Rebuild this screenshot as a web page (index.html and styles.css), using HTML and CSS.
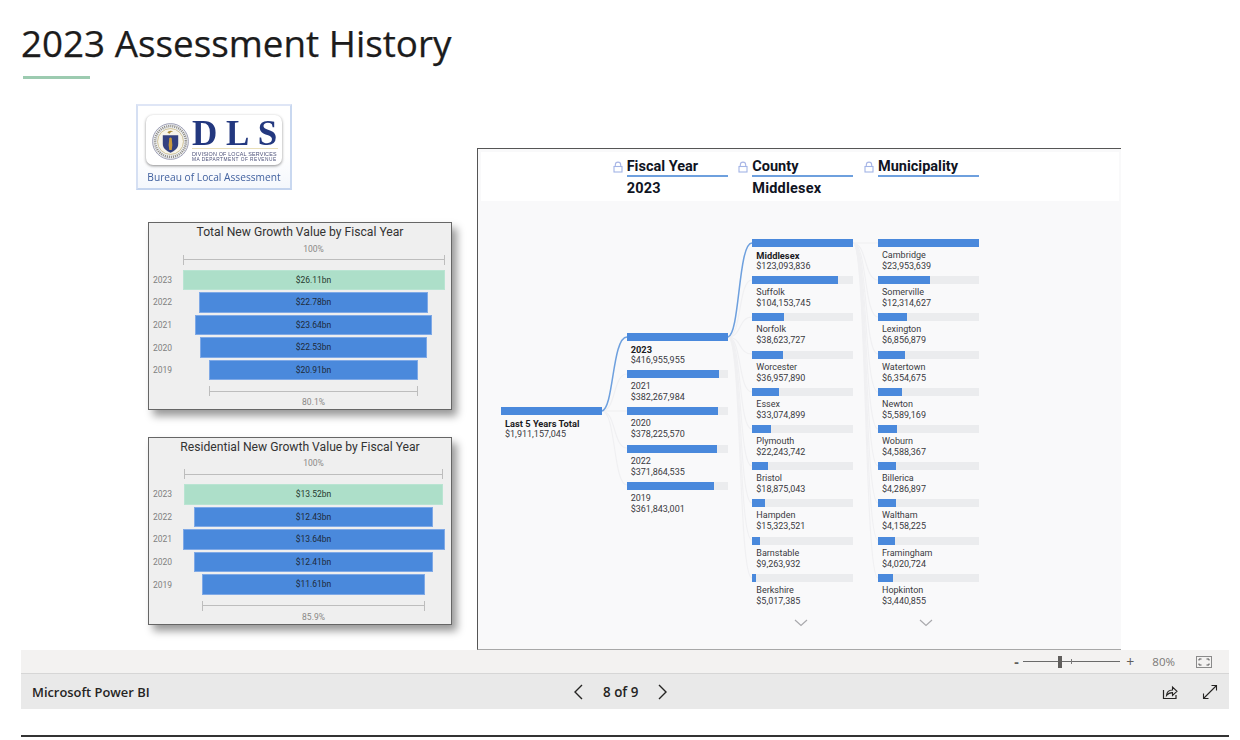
FILE: index.html
```html
<!DOCTYPE html>
<html lang="en">
<head>
<meta charset="utf-8">
<title>2023 Assessment History</title>
<link rel="stylesheet" href="styles.css">
</head>
<body>
<main class="page">
  <h1 class="title">2023 Assessment History</h1>
  <div class="rule"></div>

  <section class="canvas">
    <div class="left-col">
      <div class="logo">
        <div class="logo-card">
          <svg class="seal" viewBox="0 0 36 36" width="37" height="37">
            <circle cx="18" cy="18" r="17.4" fill="#eef0f2" stroke="#8d8fa8" stroke-width="0.8"/>
            <circle cx="18" cy="18" r="15" fill="none" stroke="#8f8c86" stroke-width="2.4" stroke-dasharray="1 1"/>
            <circle cx="18" cy="18" r="12.6" fill="#f7f4ea" stroke="#c2b078" stroke-width="0.7"/>
            <path d="M10.5 12h15v8.500c0 4.200-3.600 6.600-7.500 8.500-3.900-1.900-7.500-4.300-7.500-8.500z" fill="#33407f"/>
            <path d="M18 14c1.200 0 1.500 1 1.300 2.300l.5 5-.6 5h-2.400l-.6-5 .5-5c-.2-1.300.1-2.300 1.300-2.300z" fill="#c99a3e"/>
            <path d="M15 9.500c1-2 4-2.500 5.500-1-1.500-.2-2.800.4-3.300 2z" fill="#a98b3a"/>
          </svg>
          <div class="logo-words">
            <div class="logo-dls">DLS</div>
            <div class="logo-sub">DIVISION OF LOCAL SERVICES</div>
            <div class="logo-sub2">MA DEPARTMENT OF REVENUE</div>
          </div>
        </div>
        <div class="logo-bureau">Bureau of Local Assessment</div>
      </div>

      <article class="funnel">
        <h2 class="funnel-title">Total New Growth Value by Fiscal Year</h2>
        <div class="span-block"><span class="span-pct">100%</span><div class="bracket" style="width:100%"><i></i></div></div>
        <div class="funnel-rows">
          <div class="f-row"><span class="f-year">2023</span><div class="f-plot"><div class="f-bar green" style="width:100%">$26.11bn</div></div></div>
          <div class="f-row"><span class="f-year">2022</span><div class="f-plot"><div class="f-bar" style="width:87.2%">$22.78bn</div></div></div>
          <div class="f-row"><span class="f-year">2021</span><div class="f-plot"><div class="f-bar" style="width:90.5%">$23.64bn</div></div></div>
          <div class="f-row"><span class="f-year">2020</span><div class="f-plot"><div class="f-bar" style="width:86.3%">$22.53bn</div></div></div>
          <div class="f-row"><span class="f-year">2019</span><div class="f-plot"><div class="f-bar" style="width:80.1%">$20.91bn</div></div></div>
        </div>
        <div class="span-block lower"><div class="bracket" style="width:80.1%"><i></i></div><span class="span-pct">80.1%</span></div>
      </article>

      <article class="funnel second">
        <h2 class="funnel-title">Residential New Growth Value by Fiscal Year</h2>
        <div class="span-block"><span class="span-pct">100%</span><div class="bracket" style="width:99.1%"><i></i></div></div>
        <div class="funnel-rows">
          <div class="f-row"><span class="f-year">2023</span><div class="f-plot"><div class="f-bar green" style="width:99.1%">$13.52bn</div></div></div>
          <div class="f-row"><span class="f-year">2022</span><div class="f-plot"><div class="f-bar" style="width:91.1%">$12.43bn</div></div></div>
          <div class="f-row"><span class="f-year">2021</span><div class="f-plot"><div class="f-bar" style="width:100%">$13.64bn</div></div></div>
          <div class="f-row"><span class="f-year">2020</span><div class="f-plot"><div class="f-bar" style="width:91%">$12.41bn</div></div></div>
          <div class="f-row"><span class="f-year">2019</span><div class="f-plot"><div class="f-bar" style="width:85.1%">$11.61bn</div></div></div>
        </div>
        <div class="span-block lower"><div class="bracket" style="width:85.1%"><i></i></div><span class="span-pct">85.9%</span></div>
      </article>
    </div>

    <section class="tree">
      <header class="tree-head">
        <div></div>
        <div class="head-col">
          <div class="head-name"><svg class="lock" viewBox="0 0 10 12" width="10" height="12"><path d="M2.300 5.500V4a2.700 2.900 0 0 1 5.400 0v1.500" fill="none" stroke="#a9b6e6" stroke-width="1.100"/><rect x="1" y="5.500" width="8" height="5.500" fill="none" stroke="#a3b4e6" stroke-width="1.100"/></svg>Fiscal Year</div>
          <div class="head-value">2023</div>
        </div>
        <div class="head-col">
          <div class="head-name"><svg class="lock" viewBox="0 0 10 12" width="10" height="12"><path d="M2.300 5.500V4a2.700 2.900 0 0 1 5.400 0v1.500" fill="none" stroke="#a9b6e6" stroke-width="1.100"/><rect x="1" y="5.500" width="8" height="5.500" fill="none" stroke="#a3b4e6" stroke-width="1.100"/></svg>County</div>
          <div class="head-value">Middlesex</div>
        </div>
        <div class="head-col">
          <div class="head-name"><svg class="lock" viewBox="0 0 10 12" width="10" height="12"><path d="M2.300 5.500V4a2.700 2.900 0 0 1 5.400 0v1.500" fill="none" stroke="#a9b6e6" stroke-width="1.100"/><rect x="1" y="5.500" width="8" height="5.500" fill="none" stroke="#a3b4e6" stroke-width="1.100"/></svg>Municipality</div>
        </div>
      </header>

      <div class="tree-body">
        <svg class="links" viewBox="478 201 643 448" width="643" height="448">
          <g class="link-faint">
            <path d="M602 411C616 411 613 374 627 374"/>
            <path d="M602 411H627"/>
            <path d="M602 411C616 411 613 448 627 448"/>
            <path d="M602 411C616 411 613 485 627 485"/>
            <path d="M728 337C742 337 738 280 752 280"/>
            <path d="M728 337C742 337 738 317 752 317"/>
            <path d="M728 337C742 337 738 354 752 354"/>
            <path d="M728 337C742 337 738 392 752 392"/>
            <path d="M728 337C742 337 738 429 752 429"/>
            <path d="M728 337C742 337 738 466 752 466"/>
            <path d="M728 337C742 337 738 503 752 503"/>
            <path d="M728 337C742 337 738 540 752 540"/>
            <path d="M728 337C742 337 738 578 752 578"/>
            <path d="M853 243H878"/>
            <path d="M853 243C867 243 864 280 878 280"/>
            <path d="M853 243C867 243 864 317 878 317"/>
            <path d="M853 243C867 243 864 354 878 354"/>
            <path d="M853 243C867 243 864 392 878 392"/>
            <path d="M853 243C867 243 864 429 878 429"/>
            <path d="M853 243C867 243 864 466 878 466"/>
            <path d="M853 243C867 243 864 503 878 503"/>
            <path d="M853 243C867 243 864 540 878 540"/>
            <path d="M853 243C867 243 864 578 878 578"/>
          </g>
          <g class="link-active">
            <path d="M602 411C614 408 612 337 627 337"/>
            <path d="M728 337C740 334 738 243 752 243"/>
          </g>
        </svg>

        <div class="tree-cols">
          <div class="tree-col level-1">
            <div class="node"><div class="track"><div class="fill" style="width:100%"></div></div><div class="node-name strong">Last 5 Years Total</div><div class="node-value">$1,911,157,045</div></div>
          </div>
          <div class="tree-col level-2">
            <div class="node"><div class="track"><div class="fill" style="width:100%"></div></div><div class="node-name strong">2023</div><div class="node-value">$416,955,955</div></div>
            <div class="node"><div class="track"><div class="fill" style="width:91.7%"></div></div><div class="node-name">2021</div><div class="node-value">$382,267,984</div></div>
            <div class="node"><div class="track"><div class="fill" style="width:90.7%"></div></div><div class="node-name">2020</div><div class="node-value">$378,225,570</div></div>
            <div class="node"><div class="track"><div class="fill" style="width:89.2%"></div></div><div class="node-name">2022</div><div class="node-value">$371,864,535</div></div>
            <div class="node"><div class="track"><div class="fill" style="width:86.800%"></div></div><div class="node-name">2019</div><div class="node-value">$361,843,001</div></div>
          </div>
          <div class="tree-col level-3">
            <div class="node"><div class="track"><div class="fill" style="width:100%"></div></div><div class="node-name strong">Middlesex</div><div class="node-value">$123,093,836</div></div>
            <div class="node"><div class="track"><div class="fill" style="width:84.6%"></div></div><div class="node-name">Suffolk</div><div class="node-value">$104,153,745</div></div>
            <div class="node"><div class="track"><div class="fill" style="width:31.4%"></div></div><div class="node-name">Norfolk</div><div class="node-value">$38,623,727</div></div>
            <div class="node"><div class="track"><div class="fill" style="width:30%"></div></div><div class="node-name">Worcester</div><div class="node-value">$36,957,890</div></div>
            <div class="node"><div class="track"><div class="fill" style="width:26.9%"></div></div><div class="node-name">Essex</div><div class="node-value">$33,074,899</div></div>
            <div class="node"><div class="track"><div class="fill" style="width:18.1%"></div></div><div class="node-name">Plymouth</div><div class="node-value">$22,243,742</div></div>
            <div class="node"><div class="track"><div class="fill" style="width:15.3%"></div></div><div class="node-name">Bristol</div><div class="node-value">$18,875,043</div></div>
            <div class="node"><div class="track"><div class="fill" style="width:12.4%"></div></div><div class="node-name">Hampden</div><div class="node-value">$15,323,521</div></div>
            <div class="node"><div class="track"><div class="fill" style="width:7.5%"></div></div><div class="node-name">Barnstable</div><div class="node-value">$9,263,932</div></div>
            <div class="node"><div class="track"><div class="fill" style="width:4.1%"></div></div><div class="node-name">Berkshire</div><div class="node-value">$5,017,385</div></div>
            <div class="more"><svg viewBox="0 0 14 8" width="14" height="8"><path d="M1 1l6 5.500L13 1" fill="none" stroke="#a9a9ad" stroke-width="1.200"/></svg></div>
          </div>
          <div class="tree-col level-3">
            <div class="node"><div class="track"><div class="fill" style="width:100%"></div></div><div class="node-name">Cambridge</div><div class="node-value">$23,953,639</div></div>
            <div class="node"><div class="track"><div class="fill" style="width:51.4%"></div></div><div class="node-name">Somerville</div><div class="node-value">$12,314,627</div></div>
            <div class="node"><div class="track"><div class="fill" style="width:28.6%"></div></div><div class="node-name">Lexington</div><div class="node-value">$6,856,879</div></div>
            <div class="node"><div class="track"><div class="fill" style="width:26.5%"></div></div><div class="node-name">Watertown</div><div class="node-value">$6,354,675</div></div>
            <div class="node"><div class="track"><div class="fill" style="width:23.3%"></div></div><div class="node-name">Newton</div><div class="node-value">$5,589,169</div></div>
            <div class="node"><div class="track"><div class="fill" style="width:19.2%"></div></div><div class="node-name">Woburn</div><div class="node-value">$4,588,367</div></div>
            <div class="node"><div class="track"><div class="fill" style="width:17.9%"></div></div><div class="node-name">Billerica</div><div class="node-value">$4,286,897</div></div>
            <div class="node"><div class="track"><div class="fill" style="width:17.4%"></div></div><div class="node-name">Waltham</div><div class="node-value">$4,158,225</div></div>
            <div class="node"><div class="track"><div class="fill" style="width:16.8%"></div></div><div class="node-name">Framingham</div><div class="node-value">$4,020,724</div></div>
            <div class="node"><div class="track"><div class="fill" style="width:14.4%"></div></div><div class="node-name">Hopkinton</div><div class="node-value">$3,440,855</div></div>
            <div class="more"><svg viewBox="0 0 14 8" width="14" height="8"><path d="M1 1l6 5.500L13 1" fill="none" stroke="#a9a9ad" stroke-width="1.200"/></svg></div>
          </div>
        </div>
      </div>
    </section>
  </section>

  <div class="zoombar">
    <span class="zoom-minus">-</span>
    <div class="slider"><span class="slider-thumb"></span><span class="slider-tick"></span></div>
    <span class="zoom-plus">+</span>
    <span class="zoom-pct">80%</span>
    <svg class="fit" viewBox="0 0 16 12" width="16" height="12">
      <rect x="0.500" y="0.500" width="15" height="11" fill="none" stroke="#8a8a8a" stroke-width="1"/>
      <path d="M3 4.500V3h2.500M10.500 3H13v1.500M13 7.500V9h-2.500M5.500 9H3V7.500" fill="none" stroke="#555" stroke-width="1"/>
    </svg>
  </div>

  <footer class="pbi-footer">
    <a class="brand">Microsoft Power BI</a>
    <div class="pager">
      <svg viewBox="0 0 10 16" width="10" height="16"><path d="M9 1L2 8l7 7" fill="none" stroke="#252423" stroke-width="1.400"/></svg>
      <span class="pager-text">8 of 9</span>
      <svg viewBox="0 0 10 16" width="10" height="16"><path d="M1 1l7 7-7 7" fill="none" stroke="#252423" stroke-width="1.400"/></svg>
    </div>
    <div class="foot-actions">
      <svg viewBox="0 0 16 16" width="16" height="16"><path d="M1.500 6v8.500h12.500V11" fill="none" stroke="#252423" stroke-width="1.200"/><path d="M4.500 11.500c.3-3.500 2.800-5.500 6-5.500V3l4.500 4.300-4.500 4.200V8.600c-2.500 0-4.500.8-6 2.900z" fill="none" stroke="#252423" stroke-width="1.100"/></svg>
      <svg viewBox="0 0 16 16" width="16" height="16"><path d="M1.500 14.500l13-13M9.500 1.500h5v5M1.500 9.500v5h5" fill="none" stroke="#252423" stroke-width="1.100"/></svg>
    </div>
  </footer>
  <div class="end-rule"></div>
</main>
</body>
</html>
```

FILE: styles.css
```css
* { box-sizing: border-box; }

html, body { margin: 0; padding: 0; background: #fff; }

body {
  width: 1240px;
  height: 740px;
  overflow: hidden;
  font-family: "Roboto", "Liberation Sans", sans-serif;
  color: #252423;
}

.page { padding: 19px 11px 0 21px; }

.title {
  margin: 0;
  font-family: "Open Sans", "Noto Sans", sans-serif;
  font-weight: 400;
  font-size: 36.800px;
  line-height: 48px;
  color: #1c1c1c;
  -webkit-text-stroke: 0.25px #1c1c1c;
  white-space: nowrap;
}

.rule {
  width: 67px;
  height: 2.500px;
  margin: 9px 0 0 2px;
  background: #9ccbb0;
}

.canvas {
  display: flex;
  align-items: flex-start;
  height: 546px;
  margin-top: 25.500px;
}

.left-col {
  flex: 0 0 456px;
  padding-left: 115px;
}

/* Logo */
.logo {
  width: 156px;
  height: 86px;
  padding: 9px 8px 0;
  border: 2px solid #dfe6f6;
  border-bottom-color: #c4d4ee;
  border-left-color: #d6e0f3;
  border-right-color: #c9d8f0;
  background: linear-gradient(#ffffff 60%, #f4f7fc);
  filter: blur(0.35px);
}

.logo-card {
  display: flex;
  align-items: center;
  gap: 3px;
  width: 136px;
  height: 50px;
  padding: 3px 4px 0 6px;
  border-radius: 7px;
  background: #fff;
  box-shadow: 0 1px 3px rgba(0, 0, 0, 0.45);
}

.seal { flex: none; }

.logo-words { flex: 1; min-width: 0; }

.logo-dls {
  font-family: "Liberation Serif", serif;
  font-weight: 700;
  font-size: 35px;
  line-height: 28px;
  letter-spacing: 8.600px;
  color: #23387f;
  white-space: nowrap;
}

.logo-sub, .logo-sub2 {
  font-family: "Liberation Sans", sans-serif;
  color: #4a4f78;
  white-space: nowrap;
  line-height: 6px;
}

.logo-sub { font-size: 5.400px; letter-spacing: 0.170px; border-top: 1px solid #e9dfb8; padding-top: 2px; }

.logo-sub2 { font-size: 4.800px; letter-spacing: 0.470px; }

.logo-bureau {
  margin-top: 5px;
  font-family: "Open Sans", sans-serif;
  font-size: 10.200px;
  line-height: 14px;
  color: #41619f;
  text-align: center;
  white-space: nowrap;
}

/* Funnel charts */
.funnel {
  width: 304px;
  height: 188px;
  margin: 32px 0 0 12px;
  padding-top: 1px;
  border: 1.500px solid #666;
  background: #efefef;
  box-shadow: 5px 6px 8px rgba(0, 0, 0, 0.4);
}

.funnel.second { margin-top: 26.500px; }

.funnel-title {
  margin: 0 0 1.500px;
  font-weight: 400;
  font-size: 12.150px;
  line-height: 17px;
  color: #333;
  text-align: center;
  white-space: nowrap;
}

.span-block {
  display: flex;
  flex-direction: column;
  align-items: center;
  width: 262px;
  margin-left: 33.500px;
}

.span-block.lower { margin-top: 6px; }

.span-pct {
  font-size: 8.500px;
  line-height: 12px;
  color: #8a8886;
}

.bracket {
  display: flex;
  align-items: center;
  height: 10px;
  border-left: 1px solid #bdbdbd;
  border-right: 1px solid #bdbdbd;
}

.bracket i { flex: 1; height: 1px; background: #bdbdbd; }

.funnel-rows {
  display: flex;
  flex-direction: column;
  gap: 2.100px;
  margin-top: 5px;
}

.f-row {
  display: flex;
  align-items: center;
  height: 20.500px;
}

.f-year {
  flex: 0 0 33.500px;
  padding-left: 4px;
  font-size: 8.500px;
  color: #7f7f7f;
}

.f-plot {
  display: flex;
  justify-content: center;
  width: 262px;
}

.f-bar {
  height: 20.500px;
  border: 1px solid #7fa9e6;
  background: #4a89dc;
  font-size: 8.500px;
  line-height: 18.500px;
  color: #1d2a3a;
  text-align: center;
  white-space: nowrap;
}

.f-bar.green { border-color: #b9e4d2; background: #addfc9; color: #26392f; }

/* Decomposition tree */
.tree {
  display: flex;
  flex-direction: column;
  flex: 0 0 644px;
  height: 502px;
  margin-top: 44px;
  border-top: 1px solid #555;
  border-left: 1px solid #555;
  border-bottom: 1px solid #a8a8a8;
  background: #f9f9fa;
}

.tree-head {
  display: grid;
  grid-template-columns: repeat(4, 101px);
  column-gap: 24.670px;
  flex: none;
  height: 49px;
  margin: 3px 2px 0 3px;
  padding: 6px 0 0 20px;
  background: #fff;
}

.head-name {
  display: flex;
  align-items: center;
  height: 19px;
  border-bottom: 2px solid #6ea0de;
  font-weight: 700;
  font-size: 14.500px;
  line-height: 17px;
  color: #10141f;
  white-space: nowrap;
}

.lock { flex: none; margin: 1px 4px 0 -14px; }

.head-value {
  margin-top: 3px;
  font-weight: 700;
  font-size: 14.500px;
  letter-spacing: 0.200px;
  line-height: 18px;
  color: #10141f;
}

.tree-body {
  position: relative;
  flex: 1;
  min-height: 0;
}

.links {
  position: absolute;
  top: 0;
  left: 0;
}

.links path { fill: none; }

.link-faint path { stroke: #f0f0f2; stroke-width: 1.200; }

.link-active path { stroke: #6ea0de; stroke-width: 1.500; }

.tree-cols {
  position: relative;
  display: grid;
  grid-template-columns: repeat(4, 101px);
  column-gap: 24.670px;
  padding-left: 23px;
}

.level-1 { padding-top: 206px; }
.level-2 { padding-top: 132px; }
.level-3 { padding-top: 38px; }

.node { height: 37.200px; }

.track {
  height: 8px;
  background: #ebecee;
}

.fill {
  height: 8px;
  background: #4a89dc;
}

.node-name, .node-value {
  padding-left: 4px;
  font-size: 9px;
  line-height: 11px;
  color: #3a3a3f;
  white-space: nowrap;
}

.node-name { margin-top: 3px; }

.node-name.strong { font-size: 9.300px; font-weight: 700; color: #1b1b22; }

.more {
  display: flex;
  justify-content: center;
  padding: 8.500px 4px 0 0;
}

/* Zoom bar */
.zoombar {
  display: flex;
  align-items: center;
  justify-content: flex-end;
  height: 23px;
  padding-right: 17px;
  background: #f3f2f1;
  color: #605e5c;
  font-family: "Open Sans", sans-serif;
}

.zoom-minus { width: 9px; font-size: 14px; font-weight: 700; line-height: 20px; }

.slider {
  position: relative;
  width: 97px;
  height: 1.500px;
  background: #6a6a6a;
}

.slider-thumb {
  position: absolute;
  top: -5px;
  left: 35px;
  width: 4px;
  height: 12px;
  background: #605e5c;
}

.slider-tick {
  position: absolute;
  top: -2px;
  left: 48px;
  width: 1px;
  height: 5px;
  background: #7a7a7a;
}

.zoom-plus { margin-left: 6px; font-size: 14px; line-height: 20px; width: 11px; }

.zoom-pct { margin-left: 15px; font-size: 11.500px; color: #7a7876; }

.fit { margin-left: 21px; }

/* Footer */
.pbi-footer {
  display: grid;
  grid-template-columns: 541px auto 1fr;
  align-items: center;
  height: 36px;
  padding-left: 11px;
  border-top: 1.500px solid #d6d6d6;
  background: #e9e9e9;
}

.brand {
  font-family: "Open Sans", sans-serif;
  font-weight: 600;
  font-size: 12.900px;
  color: #252423;
  white-space: nowrap;
}

.pager {
  display: flex;
  align-items: center;
  gap: 20px;
  font-family: "Open Sans", sans-serif;
  font-weight: 600;
  font-size: 13.400px;
}

.foot-actions {
  display: flex;
  justify-content: flex-end;
  gap: 24px;
  padding-right: 11px;
}

.end-rule {
  height: 1.500px;
  margin-top: 26px;
  background: #333;
}
```
